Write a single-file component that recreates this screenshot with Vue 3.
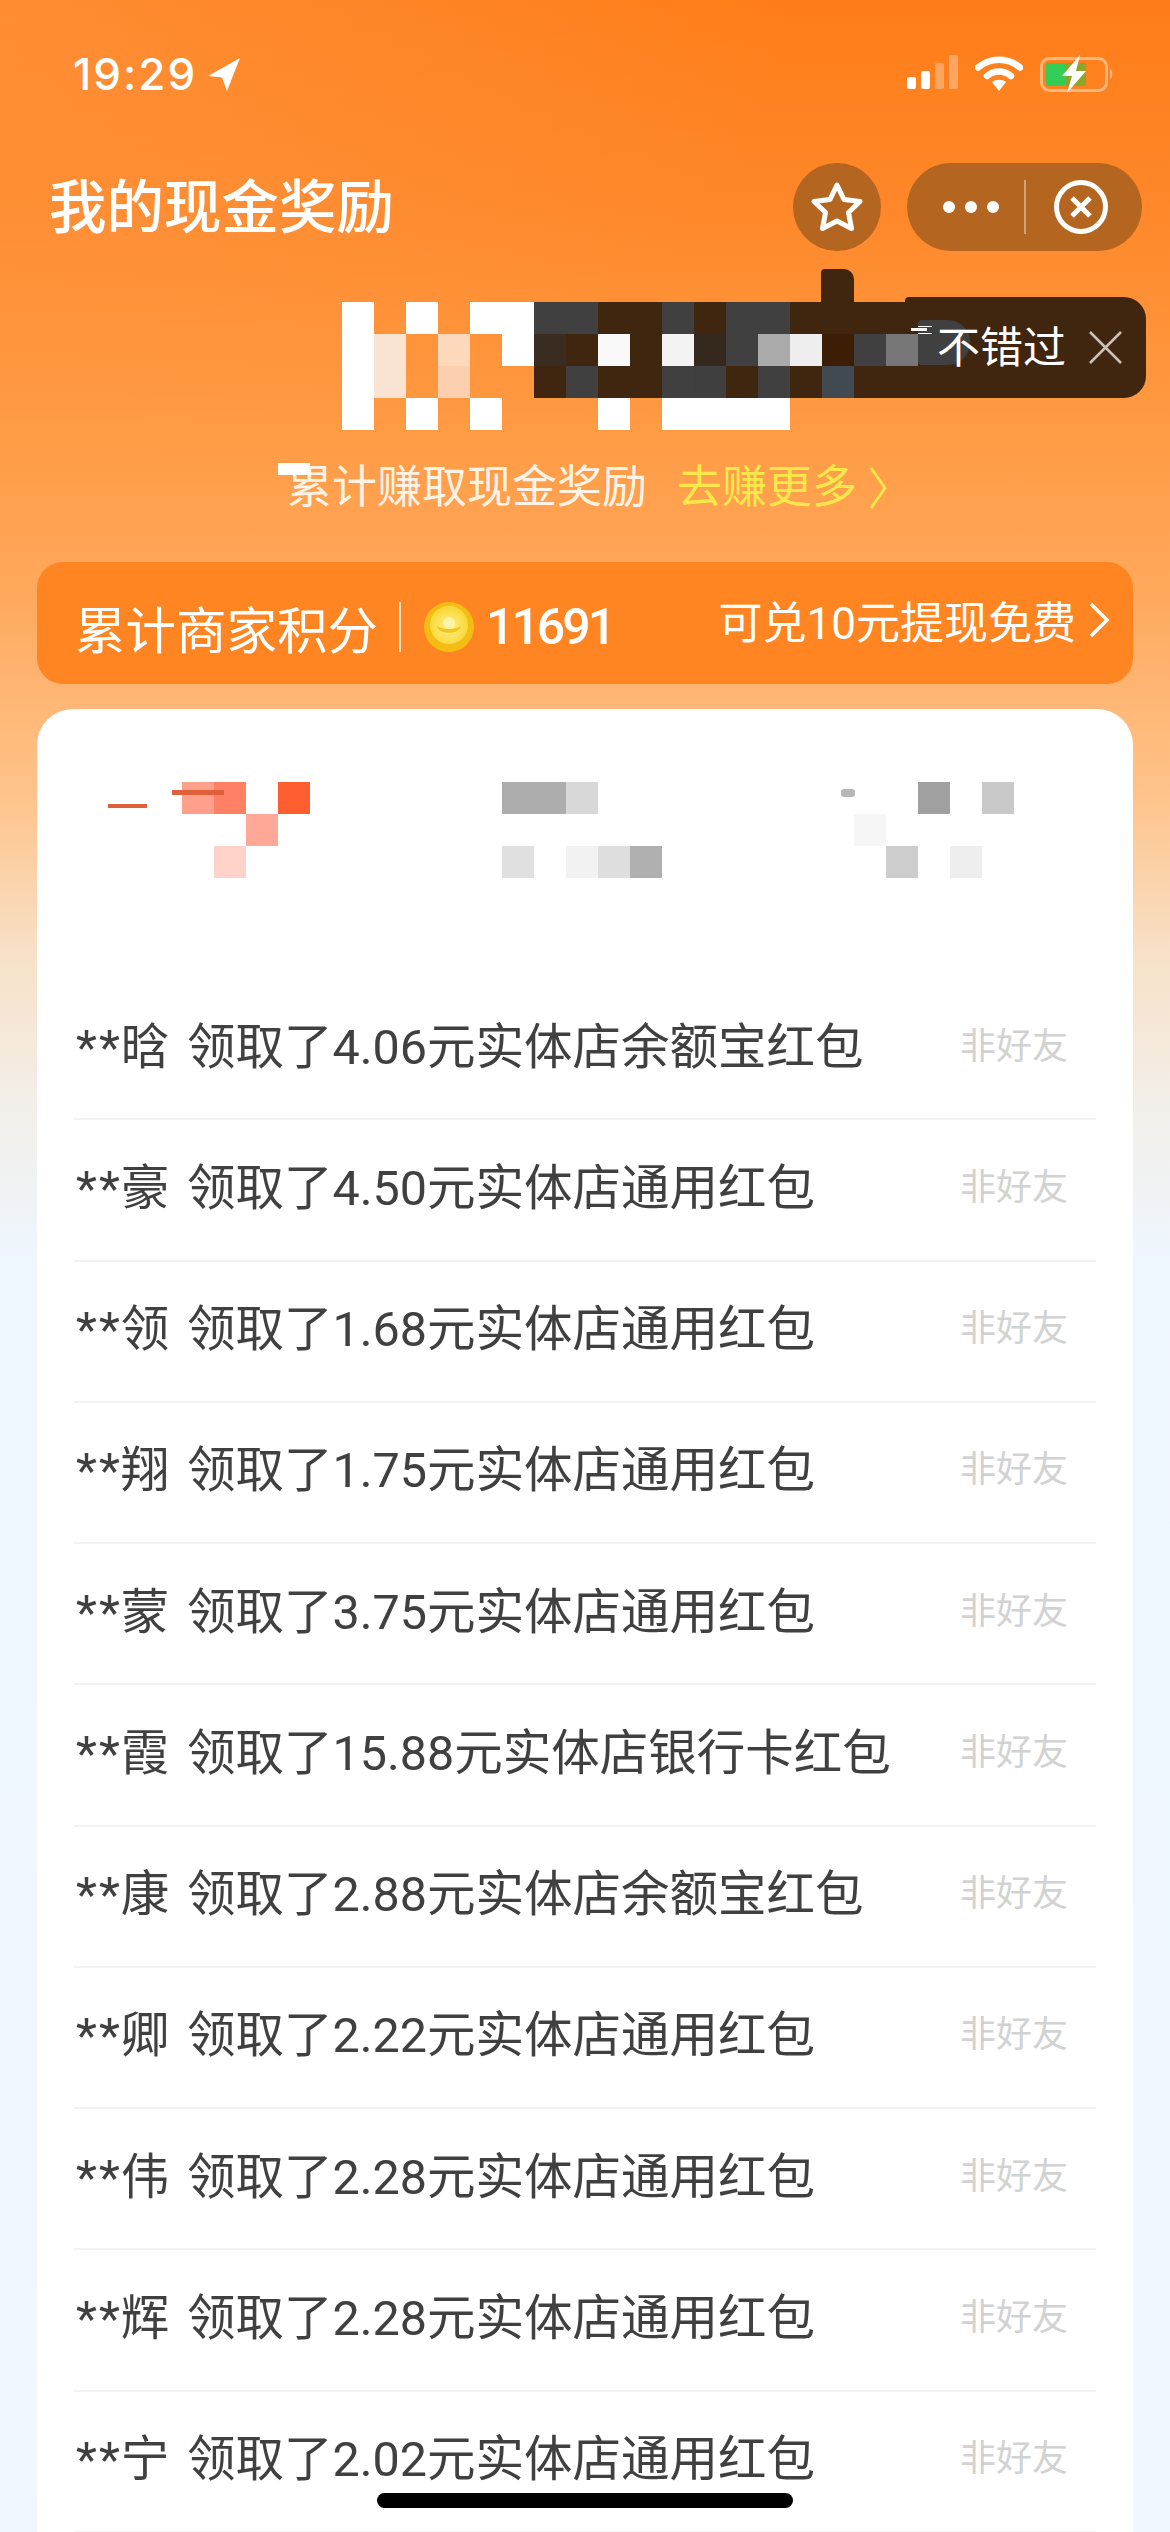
<template>
  <div class="page">
    <div class="status-bar">
      <div class="status-time">
        <span>19:29</span>
        <svg class="loc" width="32" height="33" viewBox="0 0 32 33"><path d="M32 0 L0 18 L14 19.5 L19 33 Z" fill="#fff" /></svg>
      </div>
      <div class="status-icons">
        <svg width="51" height="34" viewBox="0 0 51 34">
          <rect x="0" y="22" width="9" height="12" rx="2" fill="#fff" />
          <rect x="14" y="16" width="9" height="18" rx="2" fill="#fff" />
          <rect x="28" y="8" width="9" height="26" rx="2" fill="#fff" fill-opacity=".3" />
          <rect x="42" y="0" width="9" height="34" rx="2" fill="#fff" fill-opacity=".3" />
        </svg>
        <svg width="48" height="36" viewBox="0 0 48 36">
          <path d="M3 12.5 C15 2 33 2 45 12.5" fill="none" stroke="#fff" stroke-width="6.5" stroke-linecap="round" />
          <path d="M12 21 C19 15 29 15 36 21" fill="none" stroke="#fff" stroke-width="6.5" stroke-linecap="round" />
          <path d="M17 27 C21 24 27 24 31 27 L24 36 Z" fill="#fff" />
        </svg>
        <svg width="74" height="38" viewBox="0 0 74 38">
          <rect x="1.5" y="3.5" width="65" height="32" rx="8" fill="none" stroke="#ffb67c" stroke-width="3" />
          <rect x="6" y="8" width="20" height="23" rx="3" fill="#33cc55" />
          <rect x="26" y="8" width="20" height="23" fill="#8ca62c" />
          <path d="M70 14 C73 15 73 23 70 24 Z" fill="#ffb67c" />
          <path d="M40 0 L22 21 L32 21 L27 38 L46 16 L36 16 Z" fill="#fff" />
        </svg>
      </div>
    </div>

    <div class="header">
      <div class="title">我的现金奖励</div>
      <div class="header-actions">
        <div class="star-btn">
          <svg width="56" height="52" viewBox="0 0 56 52">
            <path d="M28 4 L35 18.5 L51 20.5 L39.5 31.5 L42.5 47.5 L28 40 L13.5 47.5 L16.5 31.5 L5 20.5 L21 18.5 Z" fill="none" stroke="#fff" stroke-width="5" stroke-linejoin="round" />
          </svg>
        </div>
        <div class="capsule">
          <div class="dots"><i></i><i></i><i></i></div>
          <div class="capsule-line"></div>
          <svg class="capsule-close" width="54" height="54" viewBox="0 0 54 54">
            <circle cx="27" cy="27" r="24.5" fill="none" stroke="#fff" stroke-width="5" />
            <path d="M18 18 L36 36 M36 18 L18 36" stroke="#fff" stroke-width="5" />
          </svg>
        </div>
      </div>
    </div>

    <div class="hero">
      <div class="mosaic hero-mosaic">
        <div v-for="(row, r) in heroCells" :key="r" class="mosaic-row">
          <span v-for="(c, i) in row" :key="i" class="cell" :style="{ background: c }"></span>
        </div>
      </div>
      <div class="stem"></div>
      <div class="tip">
        <span class="tip-blob"></span>
        <span class="tip-frag"></span>
        <span class="tip-text">不错过</span>
        <svg class="tip-x" width="33" height="33" viewBox="0 0 33 33">
          <path d="M1 1 L32 32 M32 1 L1 32" stroke="#c9c2bb" stroke-width="2.5" />
        </svg>
      </div>
      <div class="earned">
        <span class="earned-chip"></span>
        <span class="earned-label">累计赚取现金奖励</span>
        <span class="earned-link">去赚更多</span>
        <svg width="18" height="44" viewBox="0 0 18 44"><path d="M2 2 L16 22 L2 42" fill="none" stroke="#f8e84a" stroke-width="3" /></svg>
      </div>
    </div>

    <div class="points-bar">
      <div class="points-left">
        <span>累计商家积分</span>
        <span class="points-line"></span>
        <svg width="50" height="50" viewBox="0 0 50 50">
          <defs>
            <radialGradient id="coinFace" cx="50%" cy="55%" r="50%">
              <stop offset="0" stop-color="#fff08a" />
              <stop offset="1" stop-color="#f9d93a" />
            </radialGradient>
          </defs>
          <circle cx="25" cy="25" r="25" fill="#f4bd13" />
          <circle cx="25" cy="23" r="19" fill="url(#coinFace)" />
          <path d="M13 24 C18 28 32 28 37 24 C36 33 14 33 13 24 Z" fill="#f2c51d" />
          <circle cx="25" cy="21" r="6" fill="#fff4a6" />
        </svg>
        <span class="points-num">11691</span>
      </div>
      <div class="points-right">
        <span>可兑10元提现免费</span>
        <svg width="22" height="36" viewBox="0 0 22 36"><path d="M3 2 L19 18 L3 34" fill="none" stroke="#fff" stroke-width="3.5" /></svg>
      </div>
    </div>

    <div class="card">
      <div class="tabs">
        <div v-for="(tab, t) in tabCells" :key="t" class="mosaic">
          <div v-for="(row, r) in tab" :key="r" class="mosaic-row">
            <span v-for="(c, i) in row" :key="i" class="cell" :style="{ background: c }"></span>
          </div>
        </div>
        <span class="tab-dash"></span>
        <span class="tab-dash top"></span>
        <span class="tab-frag"></span>
      </div>
      <div class="list">
        <div v-for="item in records" :key="item.name" class="record">
          <span class="record-text">
            <span class="record-name"><span class="stars">**</span>{{ item.name }}</span>领取了{{ item.amount }}元实体店{{ item.kind }}红包
          </span>
          <span class="record-tag">非好友</span>
        </div>
      </div>
    </div>

    <div class="home-bar"></div>
  </div>
</template>

<script setup>
const palette = {
  w: '#ffffff', P: '#fbe3d3', Q: '#fcd8bd', R: '#fcd0ae',
  b: '#40250f', g: '#404040', d: '#3a2c20', W: '#f9f9f9', X: '#f3f3f3',
  e: '#35281d', A: '#aaaaaa', E: '#eeeeee', k: '#3d1e05', M: '#777777',
  s: '#3f3f3f', n: '#404a50',
  a: '#ffa08c', c: '#ff8064', f: '#ff5f30', h: '#ffa898', i: '#ffd3ca',
  t: '#adadad', u: '#d8d8d8', v: '#e0e0e0', x: '#f2f2f2', y: '#dedede', z: '#b0b0b0',
  l: '#a0a0a0', m: '#c8c8c8', o: '#f6f6f6', q: '#cdcdcd', r: '#eeeeee'
}

const toCells = rows => rows.map(row => [...row].map(ch => palette[ch] || 'transparent'))

const heroCells = toCells([
  'w.w.wwggbbgbggbbbb',
  'wP.Q.wdbWbXegAEkgM',
  'wP.R..bgbbgsbgbnbb',
  'w.w.w...w.wwww'
])

const tabCells = [
  toCells(['ac.f', '..h.', '.i..']),
  toCells(['ttu..', '.....', 'v.xyz']),
  toCells(['..l.m', 'o....', '.q.r.'])
]

const records = [
  { name: '晗', amount: '4.06', kind: '余额宝' },
  { name: '豪', amount: '4.50', kind: '通用' },
  { name: '领', amount: '1.68', kind: '通用' },
  { name: '翔', amount: '1.75', kind: '通用' },
  { name: '蒙', amount: '3.75', kind: '通用' },
  { name: '霞', amount: '15.88', kind: '银行卡' },
  { name: '康', amount: '2.88', kind: '余额宝' },
  { name: '卿', amount: '2.22', kind: '通用' },
  { name: '伟', amount: '2.28', kind: '通用' },
  { name: '辉', amount: '2.28', kind: '通用' },
  { name: '宁', amount: '2.02', kind: '通用' }
]
</script>

<style>
html, body {
  margin: 0;
  background: #eef6fe;
}
</style>

<style scoped>
.page {
  position: relative;
  width: 1170px;
  height: 2532px;
  overflow: hidden;
  font-family: Roboto, "Noto Sans CJK SC", sans-serif;
  color: #fff;
  background:
    radial-gradient(ellipse 800px 480px at 0 0, rgba(255, 170, 100, 0.35), rgba(255, 170, 100, 0)),
    linear-gradient(180deg, #fe7d18 0, #fe8729 200px, #ff9a42 420px, #ffa95e 600px, #fec48c 800px, #f8e0c6 950px, #f2efe8 1100px, #eef6fe 1260px, #f0f7ff 2532px);
}

.status-bar {
  display: flex;
  justify-content: space-between;
  align-items: flex-start;
  box-sizing: border-box;
  height: 163px;
  padding: 50px 56px 0 73px;
}
.status-time {
  display: flex;
  align-items: center;
  gap: 11px;
  font-family: Inter, sans-serif;
  font-size: 44px;
  font-weight: 500;
  line-height: 48px;
  letter-spacing: 2px;
}
.status-icons {
  display: flex;
  align-items: flex-start;
  gap: 17px;
  padding-top: 5px;
}

.header {
  display: flex;
  justify-content: space-between;
  align-items: center;
  height: 88px;
  padding: 0 28px 0 49px;
}
.title {
  font-size: 57.5px;
  font-weight: 500;
  padding-bottom: 8px;
}
.header-actions {
  display: flex;
  gap: 26px;
}
.star-btn {
  display: flex;
  align-items: center;
  justify-content: center;
  width: 88px;
  height: 88px;
  border-radius: 50%;
  background: #b4651f;
}
.capsule {
  display: flex;
  align-items: center;
  box-sizing: border-box;
  width: 235px;
  height: 88px;
  padding-left: 36px;
  border-radius: 44px;
  background: #b4651f;
}
.dots {
  display: flex;
  gap: 10px;
}
.dots i {
  width: 12px;
  height: 12px;
  border-radius: 50%;
  background: #fff;
}
.capsule-line {
  width: 2px;
  height: 54px;
  margin-left: 25px;
  background: rgba(255, 255, 255, 0.4);
}
.capsule-close {
  margin-left: 28px;
}

.hero {
  position: relative;
  height: 311px;
  padding-top: 51px;
  box-sizing: border-box;
}
.mosaic {
  display: flex;
  flex-direction: column;
}
.mosaic-row {
  display: flex;
  height: 32px;
}
.cell {
  flex: none;
  width: 32px;
  height: 32px;
}
.hero-mosaic {
  position: relative;
  z-index: 1;
  margin-left: 342px;
}
.stem {
  position: absolute;
  left: 821px;
  top: 18px;
  width: 33px;
  height: 33px;
  border-radius: 4px 10px 0 0;
  background: #40250f;
}
.tip {
  position: absolute;
  left: 905px;
  top: 46px;
  display: flex;
  align-items: center;
  box-sizing: border-box;
  width: 241px;
  height: 101px;
  padding-left: 32px;
  border-radius: 4px 22px 22px 4px;
  background: #40250f;
}
.tip-blob {
  position: absolute;
  left: 13px;
  top: 23px;
  width: 52px;
  height: 45px;
  border-radius: 4px 22px 22px 4px;
  background: #404040;
}
.tip-frag {
  position: absolute;
  z-index: 2;
  left: 6px;
  top: 31px;
  width: 16px;
  height: 3px;
  background: #fff;
  box-shadow: 6px -3px 0 -1px #fff, 6px 4px 0 -1px #fff;
}
.tip-text {
  position: relative;
  z-index: 2;
  font-size: 43px;
  line-height: 50px;
  white-space: nowrap;
}
.tip-x {
  margin-left: 23px;
}
.earned {
  position: relative;
  display: flex;
  align-items: center;
  height: 60px;
  margin-top: 28px;
  padding-left: 287px;
  font-size: 45px;
  line-height: 60px;
}
.earned-chip {
  position: absolute;
  left: 278px;
  top: 5px;
  width: 32px;
  height: 12px;
  background: #fff;
}
.earned-label {
  color: #fff3e6;
}
.earned-link {
  margin-left: 30px;
  margin-right: 12px;
  color: #f8e84a;
}

.points-bar {
  display: flex;
  justify-content: space-between;
  align-items: center;
  box-sizing: border-box;
  height: 122px;
  margin: 0 37px;
  padding: 0 23px 0 38px;
  border-radius: 26px;
  background: #fe8522;
}
.points-left {
  display: flex;
  align-items: center;
  font-size: 50.5px;
  padding-top: 8px;
}
.points-line {
  width: 2px;
  height: 50px;
  margin: 0 23px 0 21px;
  background: #ffe3c8;
}
.points-num {
  margin-left: 12px;
  font-size: 50px;
  font-weight: 500;
  letter-spacing: -3px;
}
.points-right {
  display: flex;
  align-items: center;
  gap: 12px;
  font-size: 44px;
  padding-bottom: 6px;
}

.card {
  position: relative;
  margin: 25px 37px 0;
  padding: 73px 37px 0;
  height: 1900px;
  box-sizing: border-box;
  border-radius: 36px;
  background: #fff;
}
.tabs {
  display: flex;
  gap: 192px;
  height: 96px;
  padding-left: 108px;
}
.tab-dash {
  position: absolute;
  left: 71px;
  top: 95px;
  width: 39px;
  height: 4px;
  background: #e0603c;
}
.tab-dash.top {
  left: 135px;
  top: 81px;
  width: 52px;
  height: 5px;
}
.tab-frag {
  position: absolute;
  left: 804px;
  top: 80px;
  width: 14px;
  height: 8px;
  border-radius: 3px;
  background: #b8b8b8;
}
.list {
  margin-top: 101px;
}
.record {
  display: flex;
  justify-content: space-between;
  align-items: center;
  box-sizing: border-box;
  height: 141.25px;
  padding: 0 28px 12px 2px;
  border-bottom: 2px solid #f2f2f2;
}
.record-text {
  display: flex;
  font-size: 48.5px;
  color: #404040;
  white-space: nowrap;
}
.record-name {
  width: 111px;
}
.stars {
  letter-spacing: 2px;
  margin-right: -1px;
}
.record-tag {
  font-size: 36px;
  color: #d2d2d2;
}

.home-bar {
  position: absolute;
  left: 377px;
  top: 2493px;
  width: 416px;
  height: 15px;
  border-radius: 8px;
  background: #000;
}
</style>
